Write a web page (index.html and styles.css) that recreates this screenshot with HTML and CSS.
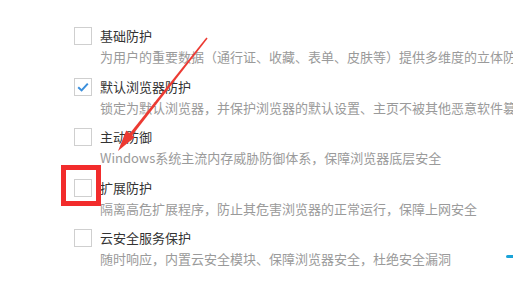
FILE: index.html
```html
<!DOCTYPE html>
<html lang="zh">
<head>
<meta charset="utf-8">
<link rel="stylesheet" href="styles.css">
</head>
<body>
<div class="page">
  <ul class="list">
    <li class="item">
      <span class="box"></span>
      <div class="text">
        <div class="title">基础防护</div>
        <div class="desc">为用户的重要数据（通行证、收藏、表单、皮肤等）提供多维度的立体防护</div>
      </div>
    </li>
    <li class="item">
      <span class="box checked">
        <svg viewBox="0 0 18 18" width="18" height="18"><path d="M4.2 9.2 L7.6 12.4 L13.8 5.6" fill="none" stroke="#3b8fdc" stroke-width="2"/></svg>
      </span>
      <div class="text">
        <div class="title">默认浏览器防护</div>
        <div class="desc">锁定为默认浏览器，并保护浏览器的默认设置、主页不被其他恶意软件篡改</div>
      </div>
    </li>
    <li class="item">
      <span class="box"></span>
      <div class="text">
        <div class="title">主动防御</div>
        <div class="desc">Windows系统主流内存威胁防御体系，保障浏览器底层安全</div>
      </div>
    </li>
    <li class="item">
      <span class="box"></span>
      <div class="text">
        <div class="title">扩展防护</div>
        <div class="desc">隔离高危扩展程序，防止其危害浏览器的正常运行，保障上网安全</div>
      </div>
    </li>
    <li class="item">
      <span class="box"></span>
      <div class="text">
        <div class="title">云安全服务保护</div>
        <div class="desc">随时响应，内置云安全模块、保障浏览器安全，杜绝安全漏洞</div>
      </div>
    </li>
  </ul>
  <div class="highlight"></div>
  <svg class="arrow" viewBox="0 0 513 295" width="513" height="295">
    <polygon points="207.6,38.4 206.4,37.6 128.9,134.6 131.3,136.4" fill="#ec3a32"/>
    <polygon points="118,151 126.2,130.6 134.6,137.2" fill="#ec3a32"/>
  </svg>
  <div class="mark"></div>
</div>
</body>
</html>
```
FILE: styles.css
```css
html, body {
  margin: 0;
  padding: 0;
  background: #ffffff;
}
.page {
  position: relative;
  width: 513px;
  height: 295px;
  overflow: hidden;
  font-family: "Microsoft YaHei", "Noto Sans CJK SC", "Noto Sans", sans-serif;
}
.list {
  list-style: none;
  margin: 0;
  padding: 27px 0 0 74px;
  display: flex;
  flex-direction: column;
  gap: 11.5px;
}
.item {
  display: flex;
  gap: 8px;
  align-items: flex-start;
}
.box {
  flex: none;
  width: 16px;
  height: 16px;
  border: 1px solid #cfcfcf;
  background: #fff;
  display: block;
  position: relative;
}
.box svg {
  position: absolute;
  left: -1px;
  top: -1px;
}
.text {
  white-space: nowrap;
}
.title {
  font-size: 13px;
  line-height: 18px;
  color: #333333;
}
.desc {
  margin-top: 3px;
  font-size: 13px;
  line-height: 18px;
  color: #9a9a9a;
}
.highlight {
  position: absolute;
  left: 61px;
  top: 165px;
  width: 30px;
  height: 31px;
  border: 5px solid #f22c2c;
}
.arrow {
  position: absolute;
  left: 0;
  top: 0;
}
.mark {
  position: absolute;
  left: 506px;
  top: 255px;
  width: 7px;
  height: 3px;
  background: #1aa3d8;
  border-radius: 2px 0 0 2px;
}
```
